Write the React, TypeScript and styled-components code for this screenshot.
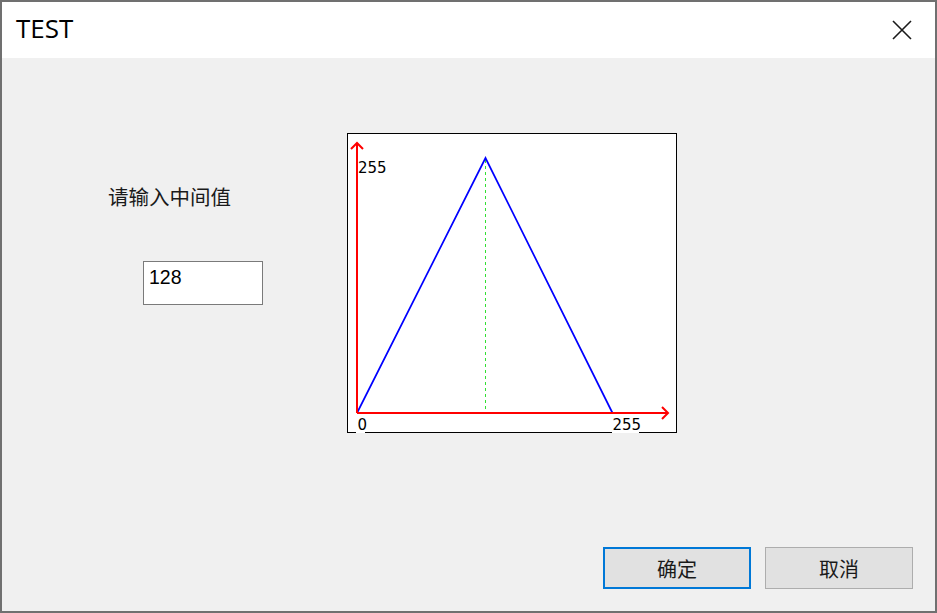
import React from "react";
import styled, { createGlobalStyle } from "styled-components";

const GlobalStyle = createGlobalStyle`
  html, body {
    margin: 0;
    padding: 0;
    background: #ffffff;
  }
  * {
    box-sizing: border-box;
  }
`;

const cjk = `"Noto Sans CJK SC", "Noto Sans", sans-serif`;

const Window = styled.div`
  width: 937px;
  height: 613px;
  border: 2px solid #707070;
  display: flex;
  flex-direction: column;
  background: #f0f0f0;
`;

const TitleBar = styled.div`
  height: 56px;
  background: #ffffff;
  display: flex;
  align-items: center;
  justify-content: space-between;
  padding: 0 23px 4px 14px;
`;

const Title = styled.span`
  font-family: "Open Sans", "Liberation Sans", sans-serif;
  font-size: 26px;
  color: #000000;
`;

const CloseButton = styled.button`
  border: 0;
  background: transparent;
  padding: 0;
  width: 20px;
  height: 20px;
  display: flex;
  align-items: center;
  justify-content: center;
  margin-top: 4px;
`;

const Body = styled.div`
  flex: 1;
  display: flex;
  flex-direction: column;
  padding: 75px 22px 22px 106px;
`;

const TopRow = styled.div`
  display: flex;
  align-items: flex-start;
`;

const LeftColumn = styled.div`
  width: 239px;
  display: flex;
  flex-direction: column;
  padding-top: 51px;
`;

const Prompt = styled.label`
  font-family: ${cjk};
  font-size: 20.5px;
  line-height: 24px;
  color: #1a1a1a;
`;

const ValueInput = styled.input`
  margin: 53px 0 0 35px;
  width: 120px;
  height: 44px;
  border: 1px solid #7a7a7a;
  background: #ffffff;
  padding: 0 5px 12px;
  font-family: "Liberation Sans", Arial, sans-serif;
  font-size: 19.5px;
  color: #000000;
  outline: none;
`;

const ChartBox = styled.div`
  width: 330px;
  height: 300px;
  background: #ffffff;
`;

const Footer = styled.div`
  margin-top: auto;
  display: flex;
  justify-content: flex-end;
  gap: 14px;
`;

const DialogButton = styled.button<{ $primary?: boolean }>`
  width: 148px;
  height: 42px;
  background: #e1e1e1;
  border: ${({ $primary }) => ($primary ? "2px solid #0078d7" : "1px solid #adadad")};
  font-family: ${cjk};
  font-size: 20px;
  color: #1a1a1a;
  padding: 0;
`;

const ChartLabel = styled.text`
  font-family: "DejaVu Sans", "Liberation Sans", sans-serif;
  font-size: 15px;
  fill: #000000;
`;

function Chart() {
  return (
    <ChartBox>
      <svg width="330" height="300" viewBox="0 0 330 300">
        <rect x="0.5" y="0.5" width="329" height="299" fill="#ffffff" stroke="#000000" />
        <line x1="138.5" y1="27" x2="138.5" y2="279" stroke="#33e033" strokeDasharray="3 3" />
        <polyline
          points="10,280 138.5,25 265.5,280"
          fill="none"
          stroke="#0000ff"
          strokeWidth="1.7"
          strokeLinejoin="miter"
        />
        <line x1="10" y1="280" x2="10" y2="10" stroke="#ff0000" strokeWidth="2" />
        <polyline points="4,16 10,10 16,16" fill="none" stroke="#ff0000" strokeWidth="2" />
        <line x1="10" y1="280" x2="321" y2="280" stroke="#ff0000" strokeWidth="2" />
        <polyline points="315,274 321,280 315,286" fill="none" stroke="#ff0000" strokeWidth="2" />
        <ChartLabel x="11" y="40">255</ChartLabel>
        <rect x="9" y="283" width="9" height="18" fill="#ffffff" />
        <ChartLabel x="10.5" y="296.5">0</ChartLabel>
        <rect x="265" y="283" width="27" height="18" fill="#ffffff" />
        <ChartLabel x="265.5" y="296.5">255</ChartLabel>
      </svg>
    </ChartBox>
  );
}

export default function App() {
  return (
    <>
      <GlobalStyle />
      <Window>
        <TitleBar>
          <Title>TEST</Title>
          <CloseButton aria-label="关闭">
            <svg width="20" height="20" viewBox="0 0 20 20">
              <path d="M1 1 L19 19 M19 1 L1 19" stroke="#1a1a1a" strokeWidth="1.6" />
            </svg>
          </CloseButton>
        </TitleBar>
        <Body>
          <TopRow>
            <LeftColumn>
              <Prompt>请输入中间值</Prompt>
              <ValueInput defaultValue="128" />
            </LeftColumn>
            <Chart />
          </TopRow>
          <Footer>
            <DialogButton $primary>确定</DialogButton>
            <DialogButton>取消</DialogButton>
          </Footer>
        </Body>
      </Window>
    </>
  );
}
